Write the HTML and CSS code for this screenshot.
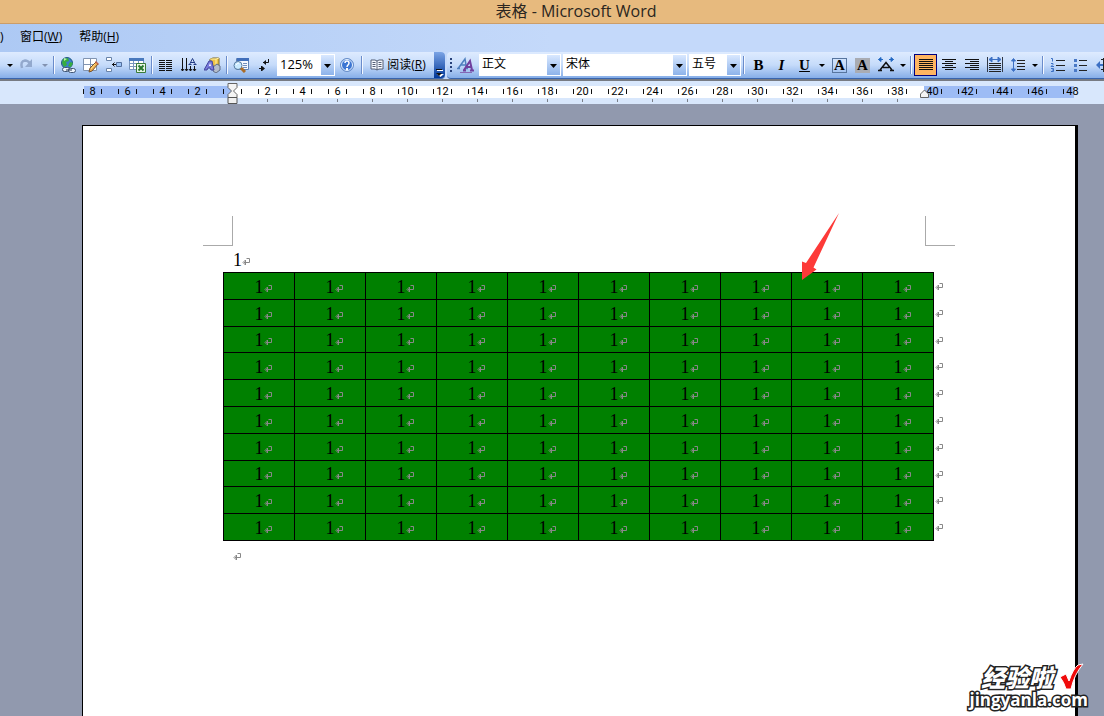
FILE: index.html
```html
<!DOCTYPE html>
<html lang="zh-CN">
<head>
<meta charset="utf-8">
<title>表格 - Microsoft Word</title>
<link rel="stylesheet" href="styles.css">
</head>
<body>
<header class="titlebar">表格 - Microsoft Word</header>
<nav class="menubar">
  <button class="menu">)</button>
  <button class="menu">窗口(<u>W</u>)</button>
  <button class="menu">帮助(<u>H</u>)</button>
</nav>
<div class="toolbars">
  <div class="toolbar standard">
    <button class="drop" aria-label="撤消列表"></button>
    <button class="tool" aria-label="恢复"><svg width="16" height="16"><path d="M3 11Q1 4 6 3.500q3 0 5 3" fill="none" stroke="#93a9cd" stroke-width="2.500"/><path d="M13 2v8H6z" fill="#93a9cd"/></svg></button>
    <button class="drop dim" aria-label="恢复列表"></button>
    <i class="sep"></i>
    <button class="tool" aria-label="插入超链接"><svg width="16" height="16"><circle cx="7" cy="6" r="5.500" fill="#397fca" stroke="#235a83"/><path d="M3 2l5-1 1 3-3 1 1 3-3 2-2-4zm7 3l3 1-2 4-3-1z" fill="#38ad3f"/><path d="M4 1l3 1-3 2z" fill="#b8efa9"/><rect x="2.500" y="10.500" width="7" height="4" rx="2" fill="#eef4fc" stroke="#415776"/><rect x="8.500" y="11.500" width="7" height="4" rx="2" fill="#eef4fc" stroke="#415776"/><path d="M6 13h6" stroke="#24344e"/></svg></button>
    <button class="tool" aria-label="表格和边框"><svg width="16" height="16"><path d="M.5 1.500h13v12H.5zM7.500 1.500v12M.5 7.500h13" fill="#fff" stroke="#8194b1"/><path d="M13 5l2 2-6 7-3 1 1-4z" fill="#f0b050" stroke="#795127"/><path d="M13 4l3 3-1 1-3-3z" fill="#c0604a"/><path d="M8 12l4-5" stroke="#ffe08c"/></svg></button>
    <button class="tool" aria-label="插入行"><svg width="17" height="16"><path d="M.5.5h5v3h-5zM.5 11.500h5v3h-5z" fill="#fff" stroke="#6983a8"/><path d="M10.500 5.500h5v4h-5z" fill="#9bc2f5" stroke="#536f9d"/><path d="M6 7.500h4M8.500 5.500l-2 2 2 2" fill="none" stroke="#111"/></svg></button>
    <button class="tool" aria-label="插入 Excel 工作表"><svg width="17" height="16"><path d="M.5 1.500h14v11H.5zM1 6.500h13M1 9.500h13M4.500 4v8M9.500 4v8" fill="#fff" stroke="#7895bd"/><path d="M0 1h15v3H0z" fill="#4979bd"/><path d="M7.500 6.500h9v9h-9z" fill="#e9f6e7" stroke="#397b38"/><path d="M9.500 8.500l5 5M14.500 8.500l-5 5" stroke="#28782f" stroke-width="2"/></svg></button>
    <i class="sep"></i>
    <button class="tool" aria-label="分栏"><svg width="16" height="16"><path d="M1 3.500h6m1 0h6M1 5.500h6m1 0h6M1 7.500h6m1 0h6M1 9.500h6m1 0h6M1 11.500h6m1 0h6M1 13.500h6m1 0h6" stroke="#111"/></svg></button>
    <button class="tool" aria-label="更改文字方向"><svg width="16" height="16"><path d="M1.500 1v13M5.500 1v13M9.500 9v5M13.500 9v5M0 12l1.500 2L3 12M4 12l1.500 2L7 12M8 12l1.500 2 1.500-2M12 12l1.500 2 1.500-2" fill="none" stroke="#111"/><path d="M8.500 7.500l3-6 3 6M10 5.500h3M7.500 7.500h3m2 0h3" fill="none" stroke="#233b83"/></svg></button>
    <button class="tool" aria-label="绘图"><svg width="17" height="16"><path d="M6 2l3-1h6v7l-3 2H6z" fill="#efc345" stroke="#76642a"/><path d="M6 2h6v7M12 2l3-1" fill="none" stroke="#fff1a6"/><path d="M9 10l4-3 3 2v4l-4 3-3-2z" fill="#b4bccb" stroke="#606d83"/><path d="M0 13l5-9h3l2 9H7L6 11H4l-1 2z" fill="#7979db" stroke="#40449b"/><path d="M5 9l1-3 1 3z" fill="#fff"/></svg></button>
    <i class="sep"></i>
    <button class="tool" aria-label="文档结构图"><svg width="17" height="16"><path d="M3.500 1.500h12v11h-12z" fill="#f5f8ff" stroke="#6082b5"/><path d="M4 1h12v3H4z" fill="#416fba"/><path d="M10 6.500h4m-4 2h4m-4 2h4" stroke="#708ebd"/><circle cx="5" cy="8.500" r="4" fill="#c9eaff" stroke="#54789e"/><path d="M8 11l4 4" stroke="#aa6c28" stroke-width="3"/><path d="M3 8q1-2 3-2" fill="none" stroke="#fff"/></svg></button>
    <button class="tool" aria-label="显示编辑标记"><svg width="14" height="16"><path d="M11.500 2v3.500H6M4.500 9v5M2 11.500h5" fill="none" stroke="#111"/><path d="M9 3v5L6 5.500zM5 9l3 2.500L5 14z" fill="#111"/></svg></button>
    <select class="combo zoom" aria-label="显示比例"><option>125%</option></select>
    <button class="tool" aria-label="帮助"><svg width="16" height="16"><circle cx="8" cy="8" r="6.500" fill="#3c76d3" stroke="#6c91c9"/><circle cx="8" cy="8" r="5.500" fill="none" stroke="#e8f3ff"/><path d="M6 6q0-2 2-2t2 2q0 1-1 2T8 10" fill="none" stroke="#fff" stroke-width="1.500"/><path d="M7 11h2v2H7z" fill="#fff"/></svg></button>
    <i class="sep"></i>
    <button class="read"><svg width="14" height="14"><path d="M1 2h4l2 1 2-1h4v9H9l-2 1-2-1H1z" fill="#f7faff" stroke="#555f75"/><path d="M7 3v9M2.500 4.500h3m-3 2h3m-3 2h3m3-4h3m-3 2h3m-3 2h3" stroke="#555f75"/></svg><span>阅读(<u>R</u>)</span></button>
    <button class="overflow" aria-label="工具栏选项"><svg width="9" height="10"><path d="M2 2h6v1H2zM2 6h7L5.500 9z" fill="#fff"/><path d="M1 1h6v1H1zM1 5h6L4 8z" fill="#111"/></svg></button>
  </div>
  <div class="toolbar formatting">
    <i class="grip"></i>
    <button class="tool" aria-label="格式窗格"><svg width="18" height="16"><path d="M1.500 11L8 2l1.500 9M4 8h5M0 11.500h3m5 0h3" fill="none" stroke="#4f80bf" stroke-width="1.500"/><path d="M7 13l6-9 2 9M9 10h5M6 13.500h3m4 0h4" fill="none" stroke="#70409e" stroke-width="2"/><path d="M3 15.500h12" stroke="#8468b5"/></svg></button>
    <select class="combo style" aria-label="样式"><option>正文</option></select>
    <select class="combo font" aria-label="字体"><option>宋体</option></select>
    <select class="combo size" aria-label="字号"><option>五号</option></select>
    <i class="sep"></i>
    <button class="tool letter bold">B</button>
    <button class="tool letter italic">I</button>
    <button class="tool letter under">U</button>
    <button class="drop" aria-label="下划线样式"></button>
    <button class="tool" aria-label="字符边框"><span class="char boxed">A</span></button>
    <button class="tool" aria-label="字符底纹"><span class="char shaded">A</span></button>
    <button class="tool" aria-label="字符缩放"><svg width="18" height="16"><path d="M1.500 2.500H6m6 0h4.500M4 .5l-2.500 2L4 4.500zM14 .5l2.500 2-2.500 2z" fill="#2368c2" stroke="#2368c2"/><path d="M3 13l6-7.500 6 7.500M6 10.500h6M1 13.500h4m8 0h4" fill="none" stroke="#111" stroke-width="1.500"/></svg></button>
    <button class="drop narrow" aria-label="字符缩放列表"></button>
    <i class="sep"></i>
    <button class="tool active" aria-label="两端对齐"><svg width="16" height="16"><path d="M1 2.500h14M1 4.500h14M1 6.500h14M1 8.500h14M1 10.500h14M1 12.500h14" stroke="#111"/></svg></button>
    <button class="tool" aria-label="居中"><svg width="16" height="16"><path d="M1 2.500h14M4 4.500h8M1 6.500h14M4 8.500h8M1 10.500h14M4 12.500h8" stroke="#111"/></svg></button>
    <button class="tool" aria-label="右对齐"><svg width="16" height="16"><path d="M1 2.500h14M6 4.500h9M1 6.500h14M6 8.500h9M1 10.500h14M6 12.500h9" stroke="#111"/></svg></button>
    <button class="tool" aria-label="分散对齐"><svg width="16" height="16"><path d="M.5 0v15M15.500 0v15" stroke="#303846"/><path d="M3 2.500h10M5 0L2 2.500 5 5zM11 0l3 2.500L11 5z" fill="#3c70c4" stroke="#3c70c4"/><path d="M2 6.500h12M2 8.500h12M2 10.500h12M2 12.500h12M2 14.500h12" stroke="#222"/></svg></button>
    <button class="tool" aria-label="行距"><svg width="16" height="16"><path d="M3.500 2v12M1.500 4l2-2.500 2 2.500zM1.500 12l2 2.500 2-2.500z" fill="#3c70c4" stroke="#3c70c4"/><path d="M7 3.500h8M7 6.500h8M7 9.500h8M7 12.500h8" stroke="#222"/></svg></button>
    <button class="drop narrow" aria-label="行距列表"></button>
    <i class="sep"></i>
    <button class="tool" aria-label="编号"><svg width="16" height="16"><path d="M1 1.500h1.500v3M1 6.500h2v1L1 9.500h3M1 11.500h2.500v3H1m1-1.500h1" fill="none" stroke="#3c70c4"/><path d="M6 3.500h9M6 8.500h9M6 13.500h9" stroke="#222"/></svg></button>
    <button class="tool" aria-label="项目符号"><svg width="16" height="16"><path d="M1 2h3v3H1zM1 7h3v3H1zM1 12h3v3H1z" fill="#4a79c6"/><path d="M6 3.500h8M6 8.500h8M6 13.500h8" stroke="#222"/></svg></button>
    <button class="tool" aria-label="减少缩进量"><svg width="16" height="16"><path d="M4 4v8L0 8zM4 7h3v2H4z" fill="#3c70c4"/><path d="M5 2.500h10M8 4.500h7M8 6.500h7M8 8.500h7M8 10.500h7M5 12.500h10M7.500 1v14" stroke="#222"/></svg></button>
  </div>
</div>
<div class="ruler">
  <ol class="scale">
    <li>8</li><li>6</li><li>4</li><li>2</li><li class="origin"><svg width="11" height="21"><path d="M1 .5h9v4L6.500 8 10 11.500v3H1v-3L4.500 8 1 4.500z" fill="#f4f4f4" stroke="#666"/><path d="M1 14.500h9v6H1z" fill="#f0f0f0" stroke="#555"/></svg></li>
    <li class="in">2</li><li class="in">4</li><li class="in">6</li><li class="in">8</li><li class="in">10</li><li class="in">12</li><li class="in">14</li><li class="in">16</li><li class="in">18</li><li class="in">20</li><li class="in">22</li><li class="in">24</li><li class="in">26</li><li class="in">28</li><li class="in">30</li><li class="in">32</li><li class="in">34</li><li class="in">36</li><li class="in">38</li>
    <li class="edge"><svg width="9" height="9"><path d="M.5 8.500V5l4-4 4 4v3.500z" fill="#f4f4f4" stroke="#666"/></svg>40</li><li>42</li><li>44</li><li>46</li><li class="last">48</li>
  </ol>
</div>
<main class="workspace">
  <article class="page">
    <div class="corners"><i class="corner left"></i><i class="corner right"></i></div>
    <p class="para mark">1</p>
    <table class="grid">
      <tbody>
        <tr><td>1</td><td>1</td><td>1</td><td>1</td><td>1</td><td>1</td><td>1</td><td>1</td><td>1</td><td>1</td></tr>
        <tr><td>1</td><td>1</td><td>1</td><td>1</td><td>1</td><td>1</td><td>1</td><td>1</td><td>1</td><td>1</td></tr>
        <tr><td>1</td><td>1</td><td>1</td><td>1</td><td>1</td><td>1</td><td>1</td><td>1</td><td>1</td><td>1</td></tr>
        <tr><td>1</td><td>1</td><td>1</td><td>1</td><td>1</td><td>1</td><td>1</td><td>1</td><td>1</td><td>1</td></tr>
        <tr><td>1</td><td>1</td><td>1</td><td>1</td><td>1</td><td>1</td><td>1</td><td>1</td><td>1</td><td>1</td></tr>
        <tr><td>1</td><td>1</td><td>1</td><td>1</td><td>1</td><td>1</td><td>1</td><td>1</td><td>1</td><td>1</td></tr>
        <tr><td>1</td><td>1</td><td>1</td><td>1</td><td>1</td><td>1</td><td>1</td><td>1</td><td>1</td><td>1</td></tr>
        <tr><td>1</td><td>1</td><td>1</td><td>1</td><td>1</td><td>1</td><td>1</td><td>1</td><td>1</td><td>1</td></tr>
        <tr><td>1</td><td>1</td><td>1</td><td>1</td><td>1</td><td>1</td><td>1</td><td>1</td><td>1</td><td>1</td></tr>
        <tr><td>1</td><td>1</td><td>1</td><td>1</td><td>1</td><td>1</td><td>1</td><td>1</td><td>1</td><td>1</td></tr>
      </tbody>
    </table>
    <p class="para mark"></p>
    <svg class="arrow" width="40" height="70"><path d="M38 1L12.500 55.500l3 2L1 68V49.500l4 1.500z" fill="#fd3a38"/></svg>
  </article>
  <div class="watermark">
    <div class="brand"><span class="cn">经验啦</span><svg width="26" height="28"><path d="M2 14l6-3 3 7Q15 6 20 2l5-1Q16 12 13 26H8Q6 19 2 14z" fill="#f00b0b" stroke="#fff"/></svg></div>
    <div class="site">jingyanla.com</div>
  </div>
</main>
</body>
</html>
```
FILE: styles.css
```css
* { box-sizing: border-box; }
body {
  margin: 0;
  min-height: 100vh;
  display: flex;
  flex-direction: column;
  overflow: hidden;
  font: 12px/16px "Open Sans", "Noto Sans CJK SC", sans-serif;
  color: #000;
}
button { border: 0; padding: 0; margin: 0; background: none; font: inherit; color: inherit; }
svg { display: block; flex: none; }

.titlebar {
  height: 24px;
  padding-left: 48px;
  background: #e7ba7e;
  border-bottom: 1px solid #cb9d69;
  font-size: 16px;
  line-height: 22px;
  text-align: center;
  color: #2b2620;
}
.menubar {
  display: flex;
  gap: 17px;
  height: 28px;
  padding-bottom: 2px;
  align-items: center;
  background: linear-gradient(90deg, #adc9f4, #c4d9fa 50%);
}
.menubar .menu:first-child { width: 3px; }

/* Toolbars */
.toolbars {
  display: flex;
  gap: 2px;
  height: 29px;
  background: #c4d9fa;
  border-bottom: 2px solid #777b83;
}
.toolbar {
  display: flex;
  align-items: center;
  flex: none;
  background: linear-gradient(#deebff, #c5dbfa 50%, #86aee8);
  border-bottom: 1px solid #3965ad;
}
.standard { padding-left: 4px; border-radius: 0 4px 4px 0; }
.formatting { flex: 1; min-width: 0; overflow: hidden; border-radius: 4px 0 0 4px; }
.tool { display: flex; flex: none; width: 23px; height: 22px; align-items: center; justify-content: center; }
.standard .tool { padding-right: 1px; }
.active { background: #ffb561; border: 1px solid #00007f; }
.drop { flex: none; width: 12px; height: 22px; display: grid; place-items: center; }
.drop.narrow { width: 11px; }
.drop::before { content: ""; border: 3px solid transparent; border-top-color: #000; border-bottom: 0; }
.drop.dim::before { border-top-color: #8292b0; }
.sep { flex: none; width: 6px; height: 18px; background: linear-gradient(90deg, transparent 2px, #6a8ccb 2px 3px, #f4f8ff 3px 4px, transparent 4px); }
.grip { flex: none; width: 2px; height: 14px; margin: 0 2px 0 3px; background: repeating-linear-gradient(#27417a 0 2px, transparent 2px 4px); }
.combo {
  appearance: none;
  flex: none;
  height: 22px;
  margin: 0 2px 0 0;
  padding: 0 14px 2px 2px;
  border: 1px solid #fff;
  border-radius: 0;
  font: inherit;
  color: #000;
  background:
    url("data:image/svg+xml,%3Csvg xmlns='http://www.w3.org/2000/svg' width='13' height='20'%3E%3Cpath d='M3 9h7l-3.500 4z'/%3E%3C/svg%3E") right center no-repeat,
    linear-gradient(#d9e8ff, #8db3ea) right / 13px 100% no-repeat,
    #fff;
}
.zoom { width: 58px; margin: 0 1px; font-size: 13px; }
.style { width: 82px; margin-left: 2px; }
.font { width: 124px; }
.size { width: 52px; margin-right: 0; }
.read { display: flex; align-items: center; justify-content: center; gap: 3px; width: 66px; height: 22px; margin-right: 3px; }
.overflow { align-self: stretch; width: 11px; display: flex; align-items: flex-end; justify-content: center; border-radius: 0 4px 4px 0; background: linear-gradient(#7ba4e5, #003799); }
.letter { font: bold 15px "Liberation Serif", serif; }
.italic { font-style: italic; }
.under { text-decoration: underline; }
.char { width: 15px; height: 15px; font: bold 15px/15px "Liberation Serif", serif; text-align: center; }
.boxed { border: 1px solid #57759e; line-height: 13px; }
.shaded { background: #a9acb3; }

/* Ruler */
.ruler { height: 23px; padding: 5px 0 0 75px; background: #d8e7fc; overflow: hidden; }
.scale {
  display: flex;
  margin: 0;
  padding: 0;
  list-style: none;
  height: 12px;
  font: 11px/12px Roboto, "Liberation Sans", sans-serif;
  background: linear-gradient(90deg, transparent 9px, #9dbcf5 9px 158px, #fff 158px 849px, #9dbcf5 849px 999px, transparent 999px);
}
.scale li {
  position: relative;
  flex: none;
  width: 35px;
  text-align: center;
  background: linear-gradient(#111, #111) 8px 3px / 1px 5px no-repeat, linear-gradient(#111, #111) 26px 3px / 1px 5px no-repeat;
}
.scale .last { background-size: 1px 5px, 0 0; }
.scale .in::after { content: ""; position: absolute; left: 17px; top: 13px; width: 1px; height: 3px; background: #7a7f88; }
.scale svg { position: absolute; left: 12px; top: -3px; }
.scale .edge { background-size: 0 0, 1px 5px; }
.scale .edge svg { left: 5px; top: 3px; }

/* Document */
.workspace { position: relative; flex: 1; display: flex; padding: 21px 26px 0 82px; background: #9199ae; }
.page {
  position: relative;
  flex: 1;
  padding: 90px 0 0 120px;
  background: #fff;
  border: solid #000;
  border-width: 1px 3px 0 1px;
  font: 18px/28px "Liberation Serif", serif;
}
.corners { display: flex; justify-content: space-between; width: 752px; }
.corner { width: 30px; height: 30px; border-bottom: 1px solid #aaa; }
.corner.left { border-right: 1px solid #aaa; }
.corner.right { border-left: 1px solid #aaa; }
.para { margin: 0; padding-left: 30px; height: 26px; }
.mark::after, .grid td::after, .grid td:last-child::before {
  content: "";
  display: inline-block;
  width: 8px;
  height: 8px;
  margin-right: -8px;
  background: url("data:image/svg+xml,%3Csvg xmlns='http://www.w3.org/2000/svg' width='8' height='8'%3E%3Cpath d='M4.500.5h3v4H2M3.500 2v5L1 4.500z' fill='none' stroke='%23888'/%3E%3C/svg%3E") no-repeat;
}
.grid { width: 711px; height: 269px; margin-left: 20px; border-collapse: collapse; table-layout: fixed; }
.grid td { position: relative; padding: 2px 0 0; line-height: 22px; text-align: center; background: #008000; border: 1px solid #000; }
.grid td:last-child::before { position: absolute; left: 72px; top: 10px; margin: 0; }
.arrow { position: absolute; left: 718px; top: 86px; }

/* Site stamp */
.watermark { position: absolute; right: 16px; bottom: 7px; color: #fff; white-space: nowrap; }
.watermark .cn, .site { -webkit-text-stroke: 3px #222; paint-order: stroke fill; }
.brand { display: flex; gap: 5px; justify-content: flex-end; padding-right: 4px; }
.cn { font: italic 900 24px/28px "Noto Sans CJK SC", sans-serif; }
.site { font: bold 17px/18px "Open Sans", sans-serif; }
```
